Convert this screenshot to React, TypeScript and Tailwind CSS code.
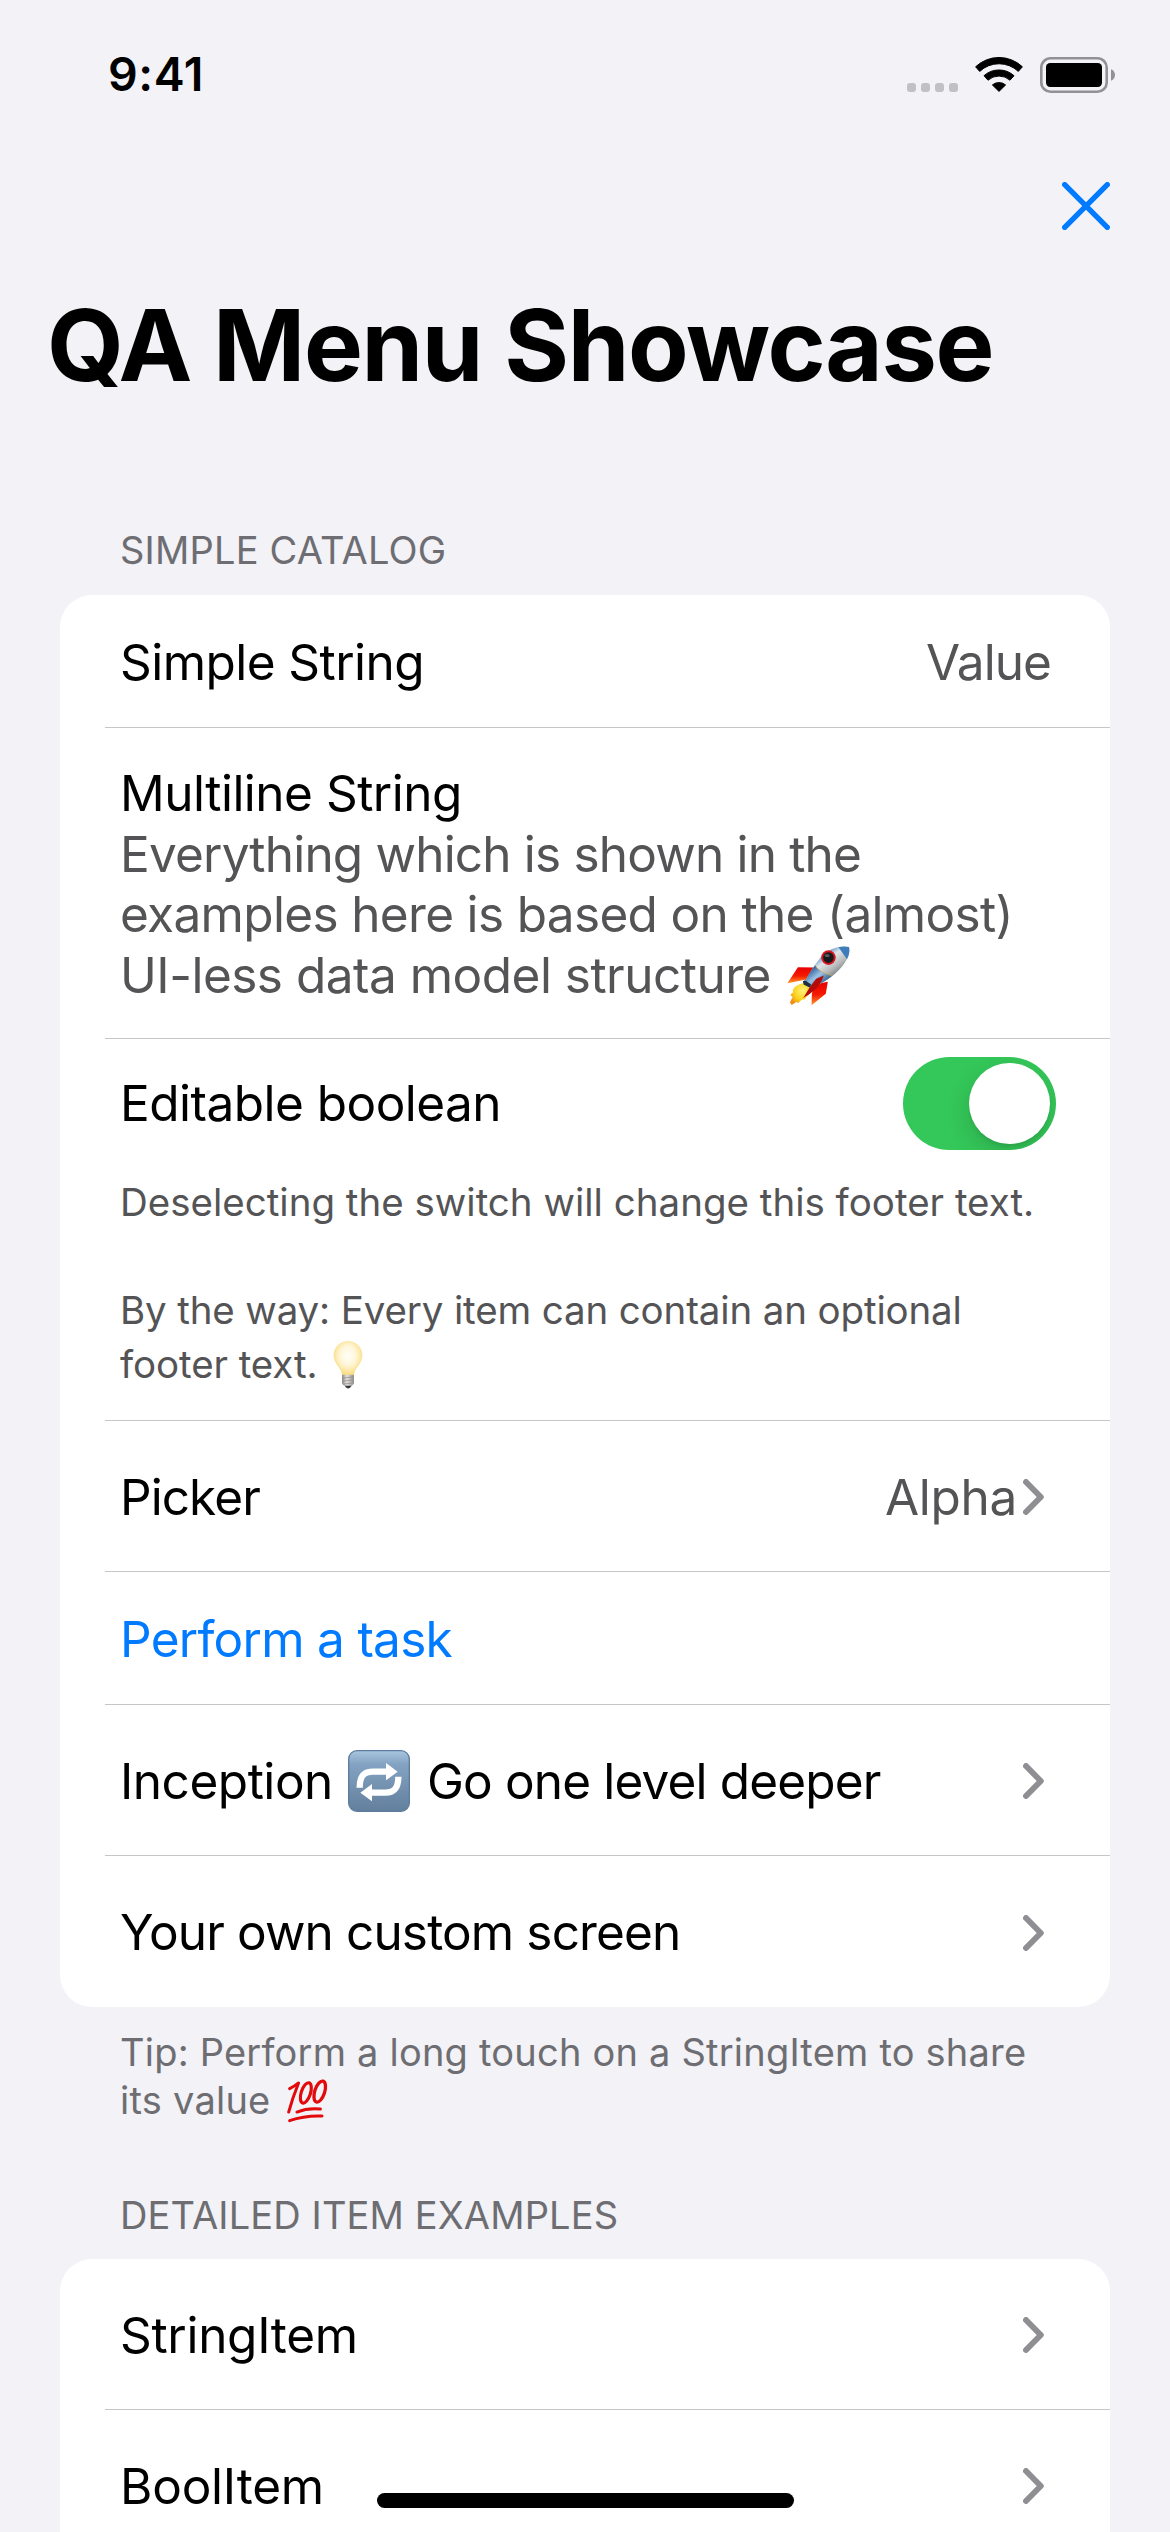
import type { ReactNode } from "react";

function Wifi() {
  return (
    <svg className="h-9 w-12" viewBox="0 0 48 36">
      <g stroke="#000" strokeWidth="1" strokeLinejoin="round">
        <path d="M0.6 10.8A34 34 0 0 1 47.4 10.8L43.3 15.4A28.2 28.2 0 0 0 4.7 15.4Z" />
        <path d="M9 19.7A22.5 22.5 0 0 1 39 19.7L35 24.2A16.6 16.6 0 0 0 13 24.2Z" />
        <path d="M17.4 28.9A10.6 10.6 0 0 1 30.6 28.9L24 35.4Z" />
      </g>
    </svg>
  );
}

function Battery() {
  return (
    <svg className="h-9 w-[76px]" viewBox="0 0 76 36">
      <rect x="1.3" y="1.3" width="65.4" height="33.4" rx="9.3" fill="none" stroke="#929196" strokeWidth="2.6" />
      <rect x="6" y="6" width="56" height="24" rx="4.2" />
      <path d="M71 12.2C73.8 13.4 75 15.6 75 18S73.8 22.6 71 23.8Z" fill="#929196" />
    </svg>
  );
}

function Chevron() {
  return (
    <svg className="h-9 w-[21px] shrink-0" viewBox="0 0 21 36">
      <path
        d="M3 3L17.800 18L3 33"
        fill="none"
        stroke="#8e8e93"
        strokeWidth="5.9"
        strokeLinecap="round"
        strokeLinejoin="round"
      />
    </svg>
  );
}

function Rocket() {
  return (
    <svg className="h-[61px] w-[63px] shrink-0" viewBox="80 75 190 184">
      <defs>
        <linearGradient id="hull" x1="0.3" y1="0.25" x2="0.7" y2="0.75">
          <stop offset="0" stopColor="#5d8fc4" />
          <stop offset="0.3" stopColor="#dfe6ea" />
          <stop offset="0.65" stopColor="#b7babb" />
          <stop offset="1" stopColor="#6d7175" />
        </linearGradient>
        <linearGradient id="tail" x1="0.2" y1="0.2" x2="0.8" y2="0.8">
          <stop offset="0" stopColor="#2c5f9a" />
          <stop offset="0.45" stopColor="#9cc3e6" />
          <stop offset="1" stopColor="#1d4f87" />
        </linearGradient>
        <linearGradient id="fin" x1="0" y1="0" x2="0" y2="1">
          <stop offset="0" stopColor="#e80000" />
          <stop offset="0.55" stopColor="#f51b00" />
          <stop offset="1" stopColor="#ff9a2a" />
        </linearGradient>
        <radialGradient id="flame" cx="0.6" cy="0.35" r="0.7">
          <stop offset="0" stopColor="#fff27a" />
          <stop offset="0.6" stopColor="#fbd21c" />
          <stop offset="1" stopColor="#f08a12" />
        </radialGradient>
      </defs>
      <path d="M168 143L113 142L81 190L134 180L150 190Z" fill="url(#fin)" />
      <path d="M203 186L197 222L154 257L155 224L160 195Z" fill="url(#fin)" />
      <path
        d="M128 190C108 194 93 208 99 217L90 226L97 232L89 248L94 256L108 247L114 250L124 240L134 239L140 230C152 222 155 212 152 203Z"
        fill="url(#flame)"
      />
      <path d="M267 81C240 74 200 88 180 114C162 136 148 160 132 188L150 205C190 192 224 166 244 142C262 120 271 100 267 81Z" fill="url(#hull)" />
      <path d="M165 136C152 152 142 170 132 188L150 205C172 197 196 184 217 167C196 164 174 152 165 136Z" fill="url(#tail)" />
      <path d="M267 81C256 78 246 79 235 82C244 94 254 109 261 118C268 104 270 92 267 81Z" fill="#3f7cba" />
      <path d="M165 136C174 152 196 164 217 167" fill="none" stroke="#d9a640" strokeWidth="2" />
      <path d="M191 167L168 177L148 203L129 235C150 222 180 204 191 167Z" fill="#b40a0a" />
      <path d="M128 184L134 181L153 194L148 203L130 194Z" fill="#1d2f40" />
      <circle cx="205" cy="113" r="19" fill="#16191c" stroke="#d81420" strokeWidth="6" />
      <ellipse cx="201" cy="107" rx="8" ry="5" fill="#53585d" />
    </svg>
  );
}

function Bulb() {
  return (
    <svg className="h-[49px] w-[30px] shrink-0" viewBox="68 90 90 146">
      <defs>
        <radialGradient id="glass" cx="0.5" cy="0.42" r="0.58">
          <stop offset="0" stopColor="#fffefa" />
          <stop offset="0.5" stopColor="#fff6d8" />
          <stop offset="1" stopColor="#f9dc7c" />
        </radialGradient>
        <linearGradient id="cap" x1="0" y1="0" x2="1" y2="0">
          <stop offset="0" stopColor="#8d8985" />
          <stop offset="0.4" stopColor="#e4e2df" />
          <stop offset="1" stopColor="#938f8b" />
        </linearGradient>
      </defs>
      <path d="M96 195C96 173 71 163 71 135C71 111 90 94 113 94S155 111 155 135C155 163 130 173 130 195Z" fill="url(#glass)" stroke="#f6d976" strokeWidth="1.5" />
      <path d="M95 194H131V218C131 222 126 227 122 228H104C100 227 95 222 95 218Z" fill="url(#cap)" />
      <path d="M96 204L130 200M96 213L130 209M98 222L129 218" stroke="#8b8783" strokeWidth="2" />
      <path d="M103 227H124C121 232 117 235 113.500 235S106 232 103 227Z" fill="#3b3b3d" />
    </svg>
  );
}

function RepeatTile() {
  return (
    <svg className="size-[62px] shrink-0" viewBox="84 90 186 186">
      <defs>
        <linearGradient id="tile" x1="0" y1="0" x2="0" y2="1">
          <stop offset="0" stopColor="#a9c6df" />
          <stop offset="0.22" stopColor="#84a3c2" />
          <stop offset="1" stopColor="#627f9c" />
        </linearGradient>
      </defs>
      <rect x="86" y="92" width="182" height="182" rx="25" fill="url(#tile)" stroke="#5c7d9e" strokeWidth="4" />
      <g id="arrow">
        <path d="M119 203C119 170 130 155 158 155H202" fill="none" stroke="#fff" strokeWidth="19" />
        <path d="M198 129L233 155L198 181Z" fill="#fff" />
      </g>
      <use href="#arrow" transform="rotate(180 177 186.500)" />
    </svg>
  );
}

function Hundred() {
  return (
    <svg className="h-[45px] w-[41px] shrink-0" viewBox="52 84 124 134">
      <g fill="none" stroke="#e20a0a" strokeLinecap="round" strokeLinejoin="round">
        <path d="M60 115Q75 108 87 98Q68 145 57 186" strokeWidth="9" />
        <ellipse cx="109" cy="128" rx="14" ry="32" strokeWidth="9.500" transform="rotate(18 109 128)" />
        <ellipse cx="151" cy="124" rx="15" ry="33" strokeWidth="10" transform="rotate(18 151 124)" />
        <path d="M82 186Q115 173 153 177" strokeWidth="9" />
        <path d="M60 212Q105 196 158 198" strokeWidth="9" />
      </g>
    </svg>
  );
}

function Row({ children, size = "tall", last = false }: { children: ReactNode; size?: "tall" | "short"; last?: boolean }) {
  return (
    <div className="pl-[45px]">
      <div
        className={
          (size === "tall" ? "h-[151px] " : "h-[133px] ") +
          (last ? "" : "border-b border-[#c6c6c8] ") +
          "flex items-center justify-between pt-0.5 pl-[15px]"
        }
      >
        {children}
      </div>
    </div>
  );
}

const body = "text-[49.5px] leading-[61px] whitespace-nowrap ";

export default function App() {
  return (
    <div className="relative flex h-[2532px] w-[1170px] flex-col overflow-hidden bg-[#f2f2f7] font-['Inter',sans-serif] text-black">
      <header className="flex h-[132px] shrink-0 items-start justify-between pl-[108px] pr-[54px]">
        <span className="mt-[44px] text-[46.5px] leading-[61px] font-semibold tracking-[0.6px]">9:41</span>
        <div className="mt-[55px] flex items-center">
          <div className="mt-[26px] flex gap-[5px]">
            {[0, 1, 2, 3].map((i) => (
              <span key={i} className="size-[9px] rounded-[3px] bg-[#c1c0c5]" />
            ))}
          </div>
          <span className="ml-[17px]">
            <Wifi />
          </span>
          <span className="mt-0.5 ml-[17px]">
            <Battery />
          </span>
        </div>
      </header>

      <div className="flex h-[148px] shrink-0 items-start justify-end pt-[50px] pr-[60px]">
        <svg className="h-12 w-12" viewBox="0 0 48 48">
          <path d="M2.700 2.700L45.300 45.300M45.300 2.700L2.700 45.300" stroke="#007aff" strokeWidth="5.400" strokeLinecap="round" />
        </svg>
      </div>

      <h1 className="h-[130px] shrink-0 pl-[47px] text-[99px] leading-[130px] font-bold tracking-[-1.350px] whitespace-nowrap">
        QA Menu Showcase
      </h1>

      <h2 className="mt-[110px] h-[75px] shrink-0 pl-[120px] text-[38px] leading-[61px] tracking-[0.2px] text-[#6d6d72]">
        SIMPLE CATALOG
      </h2>

      <section className="mx-[60px] shrink-0 overflow-hidden rounded-[32px] bg-white">
        <Row size="short">
          <span className={body + "tracking-[-0.55px]"}>Simple String</span>
          <span className={body + "pr-[59px] tracking-[-0.92px] text-[#545456]"}>Value</span>
        </Row>

        <div className="pl-[45px]">
          <div className="h-[311px] border-b border-[#c6c6c8] pt-[35px] pl-[15px] text-[49.5px] leading-[60.7px] whitespace-nowrap">
            <div className="tracking-[-0.5px]">Multiline String</div>
            <div className="text-[#545456]">
              <div className="tracking-[-0.81px]">Everything which is shown in the</div>
              <div className="tracking-[-0.66px]">examples here is based on the (almost)</div>
              <div className="flex h-[60px] items-center">
                <span className="w-[667px] tracking-[-0.5px]">UI-less data model structure</span>
                <Rocket />
              </div>
            </div>
          </div>
        </div>

        <div className="pl-[45px]">
          <div className="h-[382px] border-b border-[#c6c6c8] pt-[18px] pl-[15px]">
            <div className="flex h-[93px] items-center justify-between pr-[54px]">
              <span className={body + "tracking-[-0.52px]"}>Editable boolean</span>
              <button className="flex h-[93px] w-[153px] items-center justify-end overflow-hidden rounded-full bg-[#34c759] pr-1.5">
                <span className="size-[81px] rounded-full bg-white shadow-[0_9px_24px_rgba(0,0,0,0.15),0_3px_3px_rgba(0,0,0,0.06)]" />
              </button>
            </div>
            <div className="mt-[25px] text-[38.5px] leading-[54px] whitespace-nowrap text-[#545456]">
              <div>Deselecting the switch will change this footer text.</div>
              <div className="mt-[54px] tracking-[-0.14px]">By the way: Every item can contain an optional</div>
              <div className="flex h-[54px] items-center">
                <span className="w-[213px] tracking-[-0.09px]">footer text.</span>
                <Bulb />
              </div>
            </div>
          </div>
        </div>

        <Row>
          <span className={body + "tracking-[-0.92px]"}>Picker</span>
          <span className="flex items-center pr-[66px]">
            <span className={body + "mr-[6px] tracking-[-0.28px] text-[#545456]"}>Alpha</span>
            <Chevron />
          </span>
        </Row>
        <Row size="short">
          <span className={body + "tracking-[-0.72px] text-[#007aff]"}>Perform a task</span>
        </Row>
        <Row>
          <span className={body + "flex items-center"}>
            <span className="w-[228px] tracking-[-0.47px]">Inception</span>
            <RepeatTile />
            <span className="ml-[17px] tracking-[-0.84px]">Go one level deeper</span>
          </span>
          <span className="pr-[66px]">
            <Chevron />
          </span>
        </Row>
        <Row last>
          <span className={body + "tracking-[-0.86px]"}>Your own custom screen</span>
          <span className="pr-[66px]">
            <Chevron />
          </span>
        </Row>
      </section>

      <div className="mt-[21px] h-24 shrink-0 pl-[120px] text-[38px] leading-[48px] whitespace-nowrap text-[#6d6d72]">
        <div className="tracking-[0.21px]">Tip: Perform a long touch on a StringItem to share</div>
        <div className="flex h-12 items-center">
          <span className="w-[167px] tracking-[0.24px]">its value</span>
          <Hundred />
        </div>
      </div>

      <h2 className="mt-[61px] h-[74px] shrink-0 pl-[120px] text-[38px] leading-[61px] tracking-[0.13px] text-[#6d6d72]">
        DETAILED ITEM EXAMPLES
      </h2>

      <section className="mx-[60px] shrink-0 rounded-t-[32px] bg-white">
        <Row>
          <span className={body + "tracking-[-0.3px]"}>StringItem</span>
          <span className="pr-[66px]">
            <Chevron />
          </span>
        </Row>
        <Row>
          <span className={body + "tracking-[-0.22px]"}>BoolItem</span>
          <span className="pr-[66px]">
            <Chevron />
          </span>
        </Row>
      </section>

      <div className="absolute bottom-6 left-[377px] h-[15px] w-[417px] rounded-full bg-black" />
    </div>
  );
}
